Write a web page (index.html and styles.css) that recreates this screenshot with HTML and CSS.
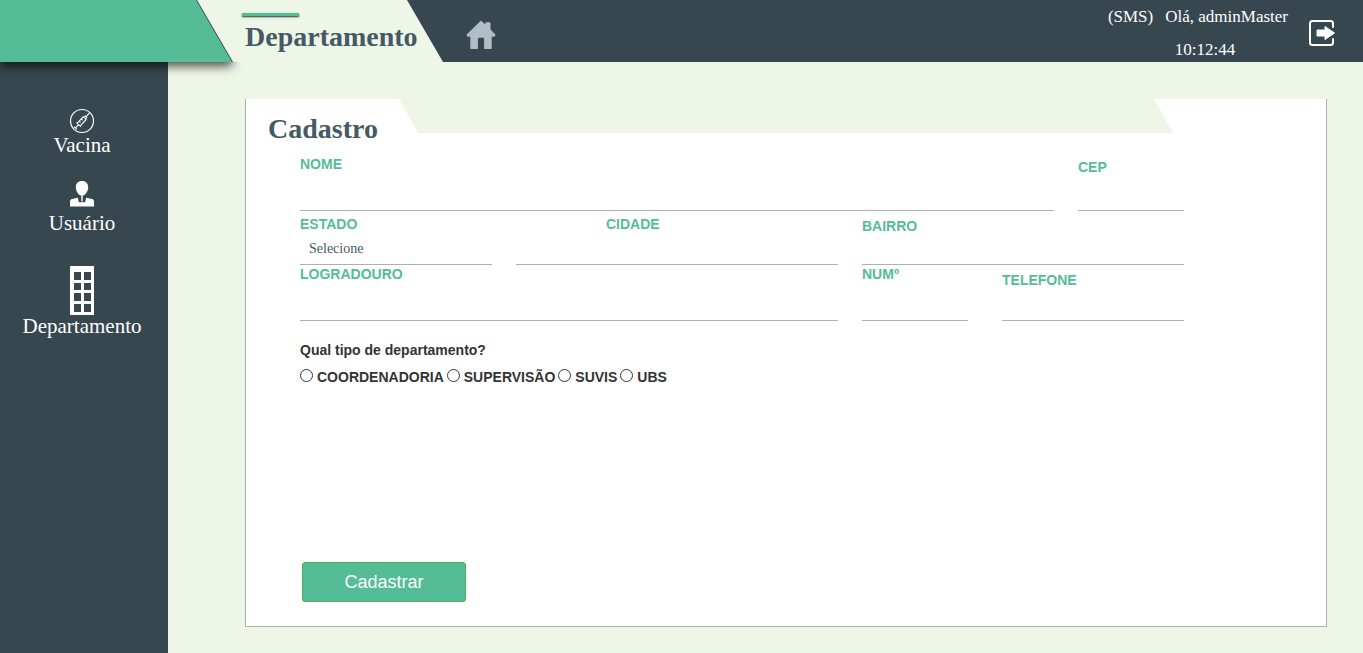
FILE: index.html
```html
<!DOCTYPE html>
<html lang="pt-BR">
<head>
<meta charset="utf-8">
<meta name="viewport" content="width=device-width, initial-scale=1">
<title>Departamento</title>
<link rel="stylesheet" href="styles.css">
</head>
<body class="page">
<header class="topbar">
  <div class="brand"></div>
  <div class="tab">
    <span class="tab-accent"></span>
    <h1 class="heading">Departamento</h1>
  </div>
  <a class="home" href="#" aria-label="Início">
    <svg width="30" height="30" viewBox="0 0 30 30"><path fill="#b0bec5" stroke="#b0bec5" stroke-width="1.4" stroke-linejoin="round" d="M15 1.5 20 6.2V3h3.800v6.800l5 5.100-.8 1.200H25V28.300h-6.200V18.500l-1.200-1.500h-5.200l-1.200 1.500v9.800H5V16.100H2l-.8-1.200z"/></svg>
  </a>
  <div class="session">
    <div class="session-user"><span>(SMS)</span><span>Olá, adminMaster</span></div>
    <time class="session-clock">10:12:44</time>
  </div>
  <a class="logout" href="#" aria-label="Sair">
    <svg width="28" height="28" viewBox="0 0 28 28"><path fill="none" stroke="#fff" stroke-width="2" stroke-linecap="round" d="M25 8V4.500Q25 2 22.500 2H4.500Q2 2 2 4.500v19Q2 26 4.500 26h18q2.500 0 2.500-2.500V20"/><path fill="#fff" stroke="#fff" stroke-linejoin="round" d="M9 11h8V7.500l9.500 6.500-9.500 6.500V17H9z"/></svg>
  </a>
</header>
<div class="body">
  <nav class="sidebar">
    <a class="nav-item" href="#">
      <svg width="26" height="26" viewBox="0 0 26 26" fill="none" stroke="#fff"><circle cx="13" cy="13" r="11.500" stroke-width="1.200"/><path transform="rotate(-47 13 13)" d="M3.500 11v4M3.500 13H8M8 10v6M8 11h9v4H8M17 12h2v2h-2M19 13h5M11 11v2M14 11v2" stroke-width="1.100"/></svg>
      <span>Vacina</span>
    </a>
    <a class="nav-item nav-user" href="#">
      <svg width="24" height="26" viewBox="0 0 24 26" fill="#fff"><path d="M12 0c4 0 6.200 2.600 6.200 6.200 0 3.300-2.700 8.600-6.200 8.600S5.800 9.500 5.800 6.200C5.800 2.600 8 0 12 0zM11.300 14h1.400v6h-1.400zM0 25.500V21c0-1.800.6-2.500 2-2.900l5.800-1.300 1 4.200 2.400.5.800-1.500.8 1.500 2.400-.5 1-4.200 5.800 1.300c1.400.4 2 1.100 2 2.900v4.500z"/></svg>
      <span>Usuário</span>
    </a>
    <a class="nav-item nav-department" href="#">
      <svg width="24" height="49" viewBox="0 0 24 49"><path fill="#fff" fill-rule="evenodd" d="M0 0h24v49H0zM4 6v8h7V6zM14 6v8h7V6zM4 17v7h7v-7zM14 17v7h7v-7zM4 27v8h7v-8zM14 27v8h7v-8zM4 38v8h7v-8zM14 38v8h7v-8z"/></svg>
      <span>Departamento</span>
    </a>
  </nav>
  <main class="content">
    <section class="card">
      <div class="card-head">
        <h2 class="heading card-title">Cadastro</h2>
        <div class="card-notch"></div>
      </div>
      <form class="form">
        <div class="row row-name">
          <div class="field field-xl"><label for="nome">NOME</label><input id="nome" type="text"></div>
          <div class="field field-lg"><label for="cep">CEP</label><input id="cep" type="text"></div>
        </div>
        <div class="row row-city">
          <div class="field"><label for="estado">ESTADO</label><select id="estado"><option>Selecione</option></select></div>
          <div class="field field-city"><label for="cidade">CIDADE</label><input id="cidade" type="text"></div>
          <div class="field field-sm"><label for="bairro">BAIRRO</label><input id="bairro" type="text"></div>
        </div>
        <div class="row row-street">
          <div class="field field-xl"><label for="logradouro">LOGRADOURO</label><input id="logradouro" type="text"></div>
          <div class="row row-phone">
            <div class="field field-xl"><label for="numero">NUMº</label><input id="numero" type="text"></div>
            <div class="field"><label for="telefone">TELEFONE</label><input id="telefone" type="tel"></div>
          </div>
        </div>
        <fieldset class="kinds">
          <legend>Qual tipo de departamento?</legend>
          <div class="kinds-list">
            <label><input type="radio" name="tipo">COORDENADORIA</label>
            <label><input type="radio" name="tipo">SUPERVISÃO</label>
            <label><input type="radio" name="tipo">SUVIS</label>
            <label><input type="radio" name="tipo">UBS</label>
          </div>
        </fieldset>
        <button class="submit" type="submit">Cadastrar</button>
      </form>
    </section>
  </main>
</div>
</body>
</html>
```
FILE: styles.css
```css
* { box-sizing: border-box; }

.page {
  margin: 0;
  min-height: 100vh;
  display: flex;
  flex-direction: column;
  background: #eef6e7;
  font-family: "Liberation Serif", "Times New Roman", serif;
}

.heading {
  margin: 0;
  font-size: 28px;
  line-height: 32px;
  font-weight: bold;
  color: #455a64;
}

.topbar {
  position: relative;
  z-index: 1;
  display: flex;
  height: 62px;
  background: #37474f;
  color: #fff;
}

.brand {
  z-index: 1;
  width: 232px;
  flex: none;
  background: #55bc98;
  box-shadow: 0 4px 10px rgba(0, 0, 0, 0.7);
  clip-path: polygon(0 0, 196px 0, 232px 100%, 250px 100%, 250px 84px, 0 84px);
}

.tab {
  flex: none;
  width: 247px;
  margin-left: -36px;
  padding: 13px 0 0 46px;
  background: #eef6e7;
  clip-path: polygon(1px 0, 211px 0, 100% 100%, 37px 100%);
}

.tab .heading { padding-left: 3px; margin-top: 5px; }

.tab-accent {
  display: block;
  width: 57px;
  height: 3px;
  background: #55bc98;
  box-shadow: 0 1px 2px rgba(0, 0, 0, 0.8);
}

.home {
  margin: 20px 0 0 23px;
  height: 30px;
}

.session {
  margin-left: auto;
  font-size: 17px;
  line-height: 33px;
}

.session-user { display: flex; gap: 12px; }

.session-clock {
  display: block;
  padding-left: 14px;
  text-align: center;
}

.logout {
  margin: 19px 27px 0 20px;
  height: 28px;
}

.body { flex: 1; display: flex; }

.sidebar {
  flex: none;
  width: 168px;
  padding: 46px 4px 0 0;
  background: #37474f;
}

.nav-item {
  display: flex;
  flex-direction: column;
  align-items: center;
  color: #fff;
  text-decoration: none;
  font-size: 21px;
  line-height: 22px;
}

.nav-user { margin-top: 25px; gap: 5px; }
.nav-department { margin-top: 32px; }

.content {
  flex: 1;
  display: flex;
  padding: 37px 36px 26px 77px;
}

.card {
  flex: 1;
  display: flex;
  flex-direction: column;
  background: #fff;
  border: 1px solid #b0b0b0;
  border-top: 0;
}

.card-head {
  display: flex;
  align-items: flex-start;
}

.card-title {
  width: 153px;
  padding: 14px 0 0 22px;
}

.card-notch {
  flex: 1;
  height: 34px;
  margin-right: 153px;
  background: #eef6e7;
  clip-path: polygon(0 0, calc(100% - 19px) 0, 100% 100%, 19px 100%);
}

.form {
  flex: 1;
  display: flex;
  flex-direction: column;
  padding: 11px 142px 24px 54px;
  font-family: "Liberation Sans", Arial, sans-serif;
  font-size: 14px;
  line-height: 16px;
}

.row {
  display: grid;
  align-items: end;
  column-gap: 24px;
}

.row-name { grid-template-columns: 754fr 106fr; }
.row-city { grid-template-columns: 192fr 322fr 322fr; margin-top: 5px; }
.row-street { grid-template-columns: 538fr 322fr; margin-top: 1px; }
.row-phone { grid-template-columns: 106fr 182fr; column-gap: 34px; }

.field { display: flex; flex-direction: column; min-width: 0; }
.field label { color: #55bc98; font-weight: bold; }
.field-city label { padding-left: 90px; }

.field input,
.field select {
  width: 100%;
  height: 33px;
  margin: 0;
  padding: 0 9px;
  border: 0;
  border-bottom: 1px solid #b0b0b0;
  border-radius: 0;
  background: transparent;
  appearance: none;
  color: #455a64;
  font: 14px "Liberation Serif", "Times New Roman", serif;
}

.field-sm input { height: 31px; }
.field-lg input { height: 36px; }
.field-xl input { height: 39px; }

.kinds {
  margin: 21px 0 16px;
  padding: 0;
  border: 0;
  color: #333;
  font-weight: bold;
}

.kinds legend { padding: 0; }

.kinds-list {
  display: flex;
  flex-wrap: wrap;
  gap: 3px;
  padding-top: 11px;
}

.kinds-list label { display: flex; gap: 4px; }

.kinds-list input {
  width: 13px;
  height: 13px;
  margin: 0;
  border: 1px solid #333;
  border-radius: 50%;
  background: #fff;
  appearance: none;
}

.kinds-list input:checked {
  background: #333;
  box-shadow: inset 0 0 0 2px #fff;
}

.submit {
  width: 164px;
  height: 40px;
  margin: auto 0 0 2px;
  border: 1px solid #4caf50;
  border-radius: 3px;
  background: #55bc98;
  color: #fff;
  font: 18px "Liberation Sans", Arial, sans-serif;
}
```
